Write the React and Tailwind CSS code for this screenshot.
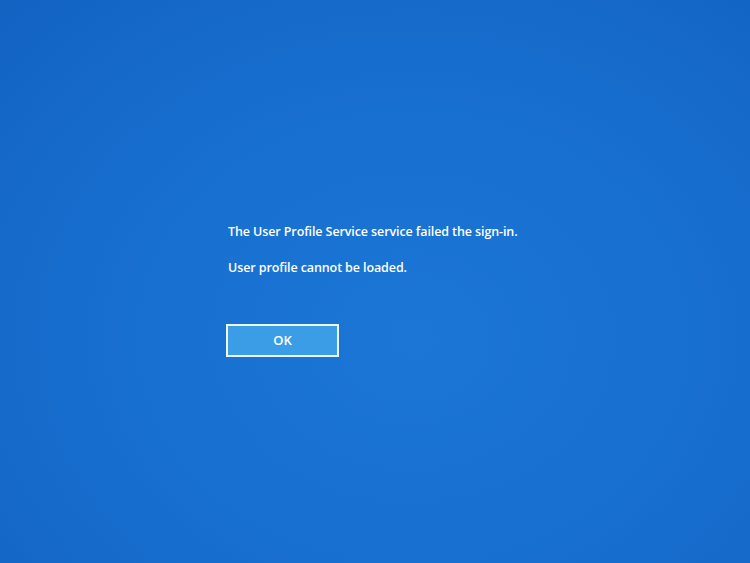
import React from "react";

export default function App() {
  return (
    <div
      className="w-[750px] h-[563px] overflow-hidden bg-[radial-gradient(ellipse_at_55%_60%,#1b76d6_0%,#1870d0_45%,#1568c8_80%,#1262c2_100%)] text-white"
      style={{ fontFamily: '"Open Sans", "Noto Sans", sans-serif' }}
    >
      <div className="pl-[228px] pt-[222px] flex flex-col">
        <p className="text-[12.5px] leading-[20px] font-semibold tracking-[-0.1px]">
          The User Profile Service service failed the sign-in.
        </p>
        <p className="mt-[16px] text-[12.5px] leading-[20px] font-semibold tracking-[-0.1px]">
          User profile cannot be loaded.
        </p>
        <button className="-ml-[2px] mt-[46px] w-[113px] h-[33px] border-2 border-[#eef6fd] bg-[#3a9de6] text-[13px] font-semibold flex items-center justify-center">
          OK
        </button>
      </div>
    </div>
  );
}
